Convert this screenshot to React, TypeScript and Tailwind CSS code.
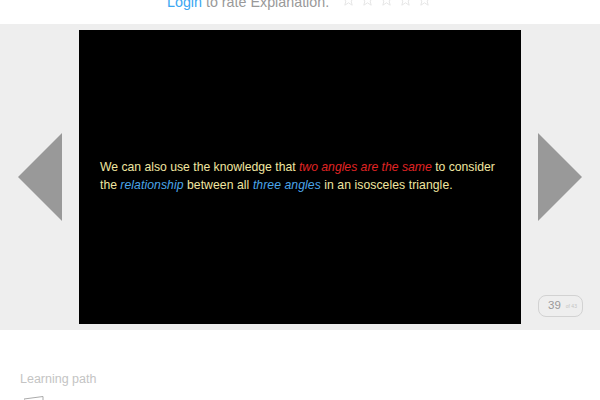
import React from 'react';

function Star() {
  return (
    <svg width="13" height="13" viewBox="0 0 13 13" fill="none" className="block">
      <path
        d="M6.5 0.8 L8.1 4.9 L12.4 5.1 L9.1 7.9 L10.2 12.2 L6.5 9.8 L2.8 12.2 L3.9 7.9 L0.6 5.1 L4.9 4.9 Z"
        stroke="#e6e6e6"
        strokeWidth="1"
      />
    </svg>
  );
}

export default function App() {
  return (
    <div className="w-[600px] h-[400px] overflow-hidden bg-white font-['Liberation_Sans',Arial,sans-serif]">
      {/* Rating row, scrolled partly off the top */}
      <div className="h-6 overflow-hidden">
        <div className="flex items-center -mt-[8px] pl-[167px] h-[20px]">
          <span className="text-[14.3px] text-[#999999] leading-[20px]">
            <span className="text-[#3ba7f2]">Login</span> to rate Explanation.
          </span>
          <div className="flex items-center gap-[6px] ml-[13px] -mt-[6px]">
            <Star />
            <Star />
            <Star />
            <Star />
            <Star />
          </div>
        </div>
      </div>

      {/* Slide viewer */}
      <div className="relative flex h-[306px] bg-[#eeeeee] py-[6px]">
        <div className="w-[79px] flex items-center pl-[18px]">
          <svg width="44" height="88" viewBox="0 0 44 88" className="block">
            <path d="M44 0 L44 88 L0 44 Z" fill="#999999" />
          </svg>
        </div>
        <div className="w-[442px] bg-black flex items-center px-[21px]">
          <p className="text-[12.2px] leading-[18px] text-[#f0e6a0] -mt-[3px]">
            We can also use the knowledge that{' '}
            <em className="text-[#e02424]">two angles are the same</em> to consider the{' '}
            <span className="tracking-[0.07px]">
              <em className="text-[#4ba6ea]">relationship</em> between all{' '}
              <em className="text-[#4ba6ea]">three angles</em> in an isosceles triangle.
            </span>
          </p>
        </div>
        <div className="w-[79px] flex items-center pl-[17px]">
          <svg width="44" height="88" viewBox="0 0 44 88" className="block">
            <path d="M0 0 L0 88 L44 44 Z" fill="#999999" />
          </svg>
        </div>
        {/* Slide counter */}
        <div className="absolute left-[538px] top-[271px] w-[45px] h-[22px] rounded-[8px] border border-[#d2d2d2] flex items-center pl-[9px] gap-[5px] text-[#999999]">
          <span className="text-[11.5px] leading-none">39</span>
          <span className="text-[5px] leading-none text-[#c4c4c4]">of 43</span>
        </div>
      </div>

      {/* Learning path */}
      <div className="pt-[42px] pl-5">
        <div className="text-[12.5px] leading-[14px] text-[#c4c4c4]">Learning path</div>
        <svg width="24" height="12" viewBox="0 0 24 12" className="block mt-[10px] ml-[4px]">
          <path d="M0 3 L19 0.5 L19 12 M0 3 L0 12" fill="none" stroke="#aaaaaa" strokeWidth="1" />
        </svg>
      </div>
    </div>
  );
}
